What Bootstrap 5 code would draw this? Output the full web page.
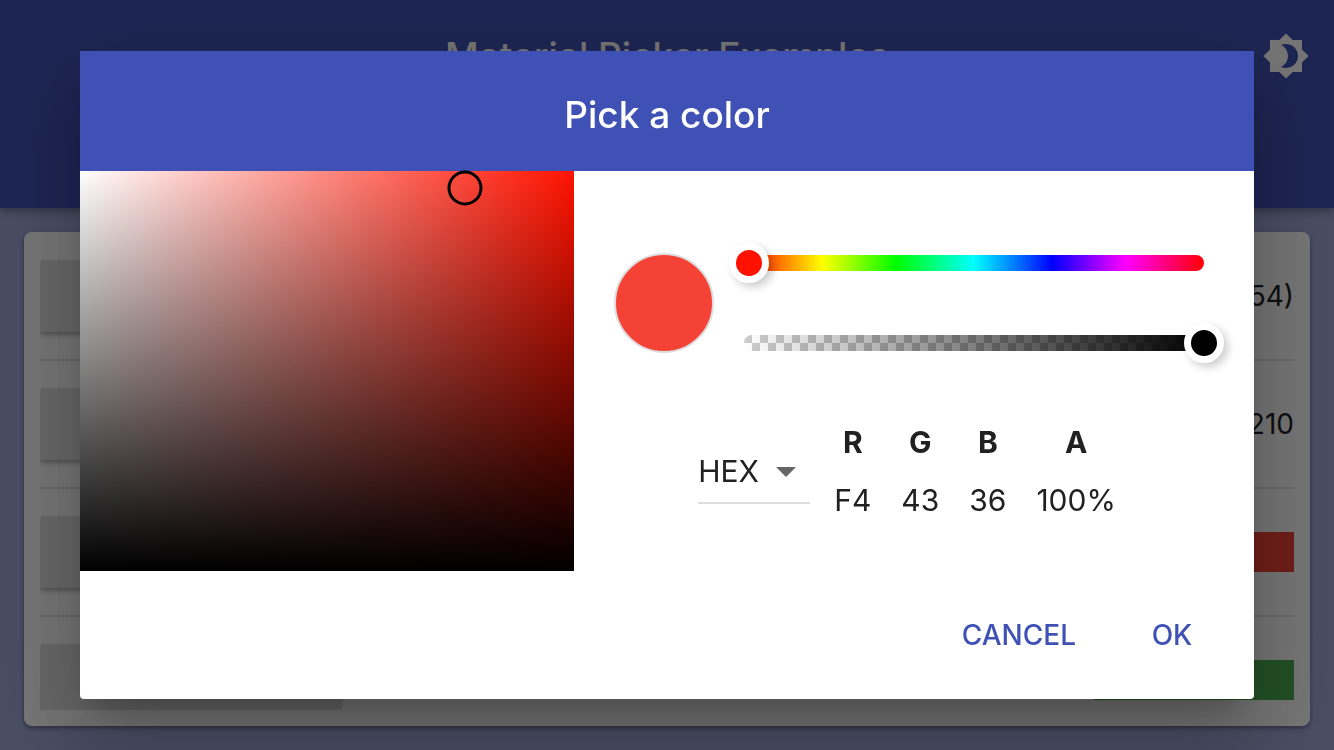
<!DOCTYPE html>
<html lang="en">
<head>
<meta charset="utf-8">
<meta name="viewport" content="width=device-width, initial-scale=1">
<title>Material Picker Examples</title>
<link href="https://cdn.jsdelivr.net/npm/bootstrap@5.3.0/dist/css/bootstrap.min.css" rel="stylesheet">
<style>
  body { font-family: Inter, sans-serif; background: #9fa8da; color: #212121; }
  h1, h2 { font-size: 37px; line-height: 48px; font-weight: 500; }
  .topbar { height: 208px; padding: 32px 24px; background: #3f51b5; box-shadow: 0 4px 8px rgba(0,0,0,.3); }
  .theme-toggle { right: 24px; top: 32px; }
  .panel { border-radius: 8px; padding: 0 16px 16px; box-shadow: 0 2px 4px rgba(0,0,0,.4); min-height: 0; }
  .example-list { overflow: hidden; padding-top: 1px; font-size: 28px; }
  .example-list li { padding: 27px 0; border-bottom: 2px solid #e4e4e4; }
  .open-picker { width: 300px; height: 72px; border: 0; border-radius: 4px; background: #e0e0e0; box-shadow: 0 3px 5px rgba(0,0,0,.3); }
  .color-bar { width: 200px; height: 40px; }

  .modal-backdrop { --bs-backdrop-opacity: .54; }
  .modal-dialog { max-width: none; margin: 0 80px; min-height: 100%; }
  .modal-content { border: 0; border-radius: 4px; color: inherit;
    box-shadow: 0 22px 30px -14px rgba(0,0,0,.2), 0 48px 76px 6px rgba(0,0,0,.14), 0 18px 92px 16px rgba(0,0,0,.12); }
  .modal-header { height: 120px; padding: 8px 24px 0; border: 0; border-radius: 0; background: #3f51b5; }
  .sat-area { flex: 0 0 42.1%; height: 400px;
    background: linear-gradient(to top, #000, transparent), linear-gradient(to right, #fff, #ff1200); }
  .sat-cursor { width: 35px; height: 35px; border: 3px solid #000; border-radius: 50%; transform: translate(-50%, -50%); }
  .controls { padding: 82px 50px 0 40px; }
  .swatch { width: 100px; height: 100px; border: 2px solid #ddd; border-radius: 50%; background: #f44336; }
  .sliders { margin-left: 30px; gap: 64px; padding-top: 2px; }
  .track { height: 16px; border-radius: 8px; }
  .hue-track { background: linear-gradient(to right, #f00, #ff0 17%, #0f0 33%, #0ff 50%, #00f 67%, #f0f 83%, #f00); }
  .alpha-track { background: linear-gradient(to right, transparent, #000), conic-gradient(#fff 25%, #ccc 0 50%, #fff 0 75%, #ccc 0) 0 0 / 16px 16px; }
  .track input { appearance: none; display: block; width: calc(100% + 40px); height: 16px; margin: 0 -20px; background: none; }
  .track input::-webkit-slider-thumb { appearance: none; width: 40px; height: 40px; border: 7px solid #fff; border-radius: 50%; background: var(--thumb); box-shadow: 4px 4px 8px rgba(0,0,0,.2); }
  .hue-track { --thumb: #ff1200; }
  .alpha-track { --thumb: #000; }
  .values { font-size: 30px; line-height: 48px; margin: 60px 0 0 84px; }
  .format { width: 112px; height: 64px; margin-top: 27px; border: 0; border-bottom: 2px solid #ddd; border-radius: 0; padding: 0; color: inherit; appearance: none;
    background: url("data:image/svg+xml,%3Csvg xmlns='http://www.w3.org/2000/svg' width='20' height='10'%3E%3Cpath d='M0 0h20L10 10z' fill='%23666'/%3E%3C/svg%3E") no-repeat right 14px top 27px; }
  .channels { margin-left: 9px; }
  .channels th, .channels td { padding: 5px 15px; text-align: center; }
  .modal-footer { height: 128px; padding: 0 18px; gap: 16px; border: 0; }
  .action { min-width: 128px; height: 72px; margin: 0; padding: 0 16px; border: 0; background: none; color: #3f51b5; font-size: 28px; font-weight: 500; }
</style>
</head>
<body class="vh-100 d-flex flex-column overflow-hidden">
<header class="topbar flex-shrink-0 position-relative text-white text-center">
  <h1 class="m-0">Material Picker Examples</h1>
  <button class="theme-toggle position-absolute btn border-0 p-0 text-white lh-1" aria-label="Toggle dark theme">
    <svg width="48" height="48" viewBox="0 0 24 24" fill="currentColor"><path d="M20 8.69V4h-4.69L12 .69 8.69 4H4v4.69L.69 12 4 15.31V20h4.69L12 23.31 15.31 20H20v-4.69L23.31 12 20 8.69zM12 18c-.89 0-1.74-.2-2.5-.55C11.56 16.5 13 14.42 13 12s-1.44-4.5-3.5-5.45C10.26 6.2 11.11 6 12 6c3.31 0 6 2.69 6 6s-2.69 6-6 6z"/></svg>
  </button>
</header>
<main class="flex-grow-1 d-flex flex-column p-4" style="min-height:0">
  <section class="panel bg-white flex-grow-1 d-flex flex-column">
    <ul class="example-list list-unstyled m-0 flex-grow-1">
      <li class="d-flex align-items-center justify-content-between"><button class="open-picker" aria-label="Open"></button><span>54)</span></li>
      <li class="d-flex align-items-center justify-content-between"><button class="open-picker" aria-label="Open"></button><span>210</span></li>
      <li class="d-flex align-items-center justify-content-between"><button class="open-picker" aria-label="Open"></button><span class="color-bar" style="background:#f44336"></span></li>
      <li class="d-flex align-items-center justify-content-between"><button class="open-picker" aria-label="Open"></button><span class="color-bar" style="background:#4caf50"></span></li>
    </ul>
  </section>
</main>

<div class="modal-backdrop show"></div>
<div class="modal d-block" role="dialog" aria-labelledby="picker-title">
  <div class="modal-dialog modal-dialog-centered">
    <div class="modal-content">
      <div class="modal-header justify-content-center text-white"><h2 class="m-0" id="picker-title">Pick a color</h2></div>
      <div class="modal-body p-0 d-flex">
        <div class="sat-area position-relative"><div class="sat-cursor position-absolute" style="left:77.9%;top:4.3%"></div></div>
        <div class="controls flex-grow-1">
          <div class="d-flex">
            <div class="swatch flex-shrink-0"></div>
            <div class="sliders flex-grow-1 d-flex flex-column">
              <div class="track hue-track"><input type="range" min="0" max="360" value="4" aria-label="Hue"></div>
              <div class="track alpha-track"><input type="range" min="0" max="100" value="100" aria-label="Alpha"></div>
            </div>
          </div>
          <div class="values d-flex align-items-start">
            <select class="format" aria-label="Format"><option>HEX</option></select>
            <table class="channels">
              <thead><tr><th>R</th><th>G</th><th>B</th><th>A</th></tr></thead>
              <tbody><tr><td>F4</td><td>43</td><td>36</td><td>100%</td></tr></tbody>
            </table>
          </div>
        </div>
      </div>
      <div class="modal-footer">
        <button class="action">CANCEL</button>
        <button class="action">OK</button>
      </div>
    </div>
  </div>
</div>
<script src="https://cdn.jsdelivr.net/npm/bootstrap@5.3.0/dist/js/bootstrap.bundle.min.js"></script>
</body>
</html>
